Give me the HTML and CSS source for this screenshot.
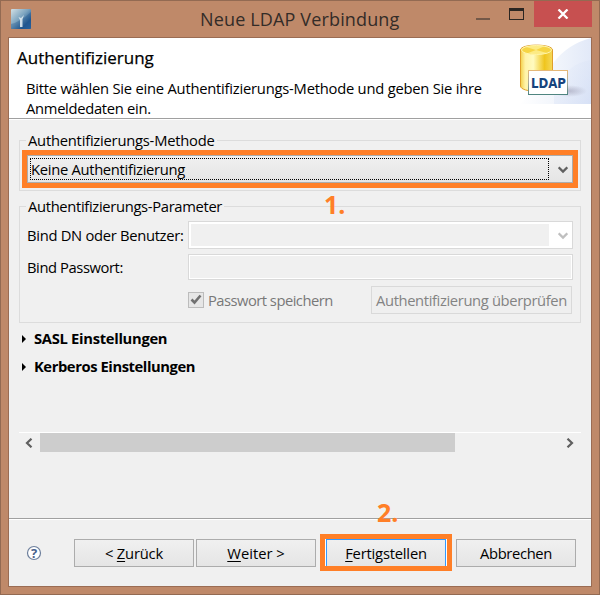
FILE: index.html
```html
<!DOCTYPE html>
<html lang="de">
<head>
<meta charset="utf-8">
<title>Neue LDAP Verbindung</title>
<link rel="stylesheet" href="styles.css">
</head>
<body>
<div class="window">
  <header class="titlebar">
    <svg class="app-icon" width="20" height="20" viewBox="0 0 20 20">
      <defs>
        <linearGradient id="app" x1="0" y1="0" x2="1" y2="1"><stop offset="0" stop-color="#d3e0e4"/><stop offset=".45" stop-color="#7ba3bf"/><stop offset=".75" stop-color="#245b94"/><stop offset="1" stop-color="#2c6aa8"/></linearGradient>
      </defs>
      <rect width="20" height="20" rx="1" fill="url(#app)"/>
      <path d="M0 15Q9 13 20 3V20H0Z" fill="#174c84" opacity=".3"/>
      <path d="M9 18V11L7.500 8L10 9L13 6L11.500 10V18Z" fill="#e4eff5" opacity=".85"/>
    </svg>
    <h1 class="title"><span>Neue LDAP Verbindung</span></h1>
    <div class="controls">
      <span class="minimize"></span>
      <span class="maximize"></span>
      <span class="close"><svg width="12" height="10" viewBox="0 0 12 10"><path d="M1.500 .5L10.500 9.500M10.500 .5L1.500 9.500" stroke="#fff" stroke-width="2.300"/></svg></span>
    </div>
  </header>
  <main class="client">
    <section class="banner">
      <div class="banner-text">
        <h2>Authentifizierung</h2>
        <p><span class="t-line1">Bitte wählen Sie eine Authentifizierungs-Methode und geben Sie ihre</span><br><span class="t-line2">Anmeldedaten ein.</span></p>
      </div>
      <svg class="ldap" width="75" height="66" viewBox="0 0 75 66">
        <defs>
          <linearGradient id="sky" x1="0" y1="0" x2="1" y2="0"><stop offset="0" stop-color="#fff"/><stop offset=".55" stop-color="#f0f4fb"/><stop offset="1" stop-color="#e2e9f8"/></linearGradient>
          <linearGradient id="low" x1="0" y1="0" x2="1" y2="1"><stop offset="0" stop-color="#e6ecf9" stop-opacity=".4"/><stop offset="1" stop-color="#cfdbf4"/></linearGradient>
          <linearGradient id="gold" x1="0" y1="0" x2="1" y2="0"><stop offset="0" stop-color="#f3d04a"/><stop offset=".15" stop-color="#fff3a8"/><stop offset=".4" stop-color="#fffbc0"/><stop offset=".75" stop-color="#efc51e"/><stop offset="1" stop-color="#f5d95a"/></linearGradient>
          <linearGradient id="card" x1="0" y1="0" x2="0" y2="1"><stop offset="0" stop-color="#e5b878"/><stop offset=".5" stop-color="#a9a99a"/><stop offset="1" stop-color="#4f8580"/></linearGradient>
          <radialGradient id="shade"><stop offset="0" stop-color="#9b9bb2" stop-opacity=".6"/><stop offset="1" stop-color="#9b9bb2" stop-opacity="0"/></radialGradient>
        </defs>
        <path d="M75 0Q52 6 38 24Q24 45 4 66H75Z" fill="url(#sky)"/>
        <path d="M75 22Q54 24 38 50V66H75Z" fill="url(#low)" opacity=".6"/>
        <ellipse cx="53" cy="53" rx="18" ry="6" fill="url(#shade)"/>
        <path d="M4.500 12C4.500 5.500 36.500 5.500 36.500 12V48C36.500 55 4.500 55 4.500 48Z" fill="url(#gold)" stroke="#df9f2b"/>
        <ellipse cx="20.500" cy="12" rx="15" ry="4.500" fill="#f6d544" stroke="#fff5ac"/>
        <path d="M20 12L10 9Q20 6 29 8ZM20 12L31 15Q20 18 12 15Z" fill="#fff3a0" opacity=".7"/>
        <rect x="12.500" y="32.500" width="39" height="24" fill="#fff" stroke="url(#card)"/>
        <text x="15" y="49.500" class="ldap-label" textLength="35" lengthAdjust="spacingAndGlyphs">LDAP</text>
      </svg>
    </section>
    <section class="content">
      <fieldset class="group method">
        <legend><span class="t-method">Authentifizierungs-Methode</span></legend>
        <div class="highlight">
          <div class="combo"><div class="focus"><span class="t-keine">Keine Authentifizierung</span></div><svg class="chevron" width="10" height="8" viewBox="0 0 10 8"><path d="M.7 1.300L5 5.600L9.300 1.300" fill="none" stroke="#606060" stroke-width="2.200"/></svg></div>
        </div>
      </fieldset>
      <span class="callout one">1.</span>
      <fieldset class="group params">
        <legend><span class="t-param">Authentifizierungs-Parameter</span></legend>
        <div class="row bind"><label class="t-bind">Bind DN oder Benutzer:</label>
          <div class="combo-off"><div class="combo-fill"></div><svg class="chevron" width="10" height="8" viewBox="0 0 10 8"><path d="M.7 1.300L5 5.600L9.300 1.300" fill="none" stroke="#bfbfbf" stroke-width="2.200"/></svg></div></div>
        <div class="row pass"><label class="t-pass">Bind Passwort:</label><div class="field"></div></div>
        <div class="actions">
          <span class="check"><svg width="12" height="11" viewBox="0 0 12 11"><path d="M1.500 5.500L4.500 8.500L10.500 1.500" fill="none" stroke="#707070" stroke-width="2.600"/></svg></span>
          <span class="save t-save">Passwort speichern</span>
          <span class="verify"><span class="t-verify">Authentifizierung überprüfen</span></span>
        </div>
      </fieldset>
      <div class="expander"><i></i><b class="t-sasl">SASL Einstellungen</b></div>
      <div class="expander"><i></i><b class="t-kerb">Kerberos Einstellungen</b></div>
      <div class="scrollbar">
        <svg width="8" height="10" viewBox="0 0 8 10"><path d="M6.500 .7L2 5L6.500 9.300" fill="none" stroke="#606060" stroke-width="2.200"/></svg>
        <div class="thumb"></div>
        <svg class="right" width="8" height="10" viewBox="0 0 8 10"><path d="M1.500 .7L6 5L1.500 9.300" fill="none" stroke="#606060" stroke-width="2.200"/></svg>
      </div>
    </section>
    <footer class="footer">
      <span class="callout two">2.</span>
      <svg class="help" width="16" height="16" viewBox="0 0 16 16"><circle cx="8" cy="8" r="6.500" fill="#fff" stroke="#6d7f9c" stroke-width="1.200"/><text x="8" y="12.500" text-anchor="middle">?</text></svg>
      <div class="button back"><span class="t-back">&lt; <u>Z</u>urück</span></div>
      <div class="button next"><span class="t-next"><u>W</u>eiter &gt;</span></div>
      <div class="finish"><div class="button"><span class="t-fin"><u>F</u>ertigstellen</span></div></div>
      <div class="button cancel"><span class="t-cancel">Abbrechen</span></div>
    </footer>
  </main>
</div>
</body>
</html>
```
FILE: styles.css
```css
* { box-sizing: border-box; }
body { margin: 0; font: 14.75px/20px "Open Sans", "Noto Sans", sans-serif; color: #000; }
h1, h2, p, fieldset, legend { margin: 0; padding: 0; font-weight: normal; }
span, label, b { white-space: nowrap; }
svg { display: block; flex: none; }
.window { width: 600px; height: 595px; background: #bf8969; border: 1px solid #936a52; padding: 0 7px 7px; display: flex; flex-direction: column; }
.titlebar { height: 36px; display: flex; flex: none; position: relative; }
.app-icon { margin: 8px 0 0 3px; }
.title { margin: 6px 0 0 169px; font-size: 18px; line-height: 25px; color: #332c28; letter-spacing: .15px; }
.controls { position: absolute; right: 0; top: 0; display: flex; }
.minimize { width: 14px; height: 2px; background: #735848; margin: 17px 19px 0 0; }
.maximize { width: 15px; height: 12px; border: 1px solid #2b2622; border-top-width: 3px; margin: 7px 10px 0 0; }
.close { width: 58px; height: 26px; background: #c75050; display: flex; align-items: center; justify-content: center; padding-right: 1px; }
.client { flex: 1; border: 1px solid #9a6c53; background: #f0f0f0; display: flex; flex-direction: column; }
.banner { height: 82px; background: #fff; border-bottom: 1px solid #fff; box-shadow: inset 0 -1px #a0a0a0; display: flex; justify-content: space-between; flex: none; }
.banner-text { padding: 8px 0 0 8px; }
h2 { font-size: 17px; line-height: 24px; -webkit-text-stroke: .25px #000; }
.banner p { margin: 8px 0 0 9px; line-height: 20px; }
.ldap-label { font: bold 14px "DejaVu Sans", sans-serif; fill: #15437d; }
.content { height: 398px; padding: 11px 10px 0 10px; position: relative; flex: none; }
.group { border: 1px solid #dcdcdc; position: relative; }
legend { margin-left: 6px; padding: 0 2px; height: 19px; line-height: 18px; }
.method { height: 60px; }
.method .highlight { margin: 0 2px; }
.highlight { border: 5px solid #ff7f27; height: 38px; }
.combo { height: 28px; border: 1px solid #acacac; background: linear-gradient(#f0f0f0, #e5e5e5); padding: 2px; display: flex; align-items: center; }
.focus { width: 519px; height: 22px; border: 1px dotted #000; line-height: 20px; }
.chevron { margin: 1px 0 0 9px; }
.callout { position: absolute; color: #ff7f27; font: bold 25px/28px "Open Sans", sans-serif; z-index: 2; }
.one { left: 315px; top: 70px; }
.params { height: 126px; margin-top: 6px; }
.row { display: flex; align-items: center; }
.row label { width: 161px; margin-left: 7px; }
.bind { margin-top: 5px; }
.combo-off { width: 385px; height: 28px; border: 1px solid #d9d9d9; background: #fff; display: flex; align-items: center; padding-left: 2px; }
.combo-fill { width: 358px; height: 22px; background: #f0f0f0; }
.pass { margin-top: 5px; }
.field { width: 385px; height: 26px; border: 1px solid #d9d9d9; background: #f0f0f0; box-shadow: inset 0 0 0 1px #fff; }
.actions { display: flex; align-items: center; margin: 6px 0 0 168px; height: 28px; color: #787878; }
.check { width: 16px; height: 16px; border: 1px solid #bcbcbc; background: #e6e6e6; padding: 1px; }
.save { margin-left: 4px; width: 163px; }
.verify { width: 201px; height: 28px; border: 1px solid #d9d9d9; background: #efefef; line-height: 26px; padding-left: 4px; color: #838383; }
.expander { height: 28px; display: flex; align-items: center; padding-left: 3px; }
.expander b { padding-bottom: 2px; }
.params + .expander { margin-top: 2px; }
.expander i { width: 0; border: 4px solid transparent; border-left: 4px solid #000; border-right: 0; margin-right: 8px; }
.scrollbar { border-top: 1px solid #fff; margin-top: 51px; height: 20px; display: flex; align-items: center; padding-left: 6px; }
.thumb { width: 415px; height: 19px; background: #cdcdcd; margin-left: 7px; }
.right { margin-left: 111px; }
.footer { flex: 1; border-top: 1px solid #a0a0a0; box-shadow: inset 0 1px #fff; display: flex; align-items: flex-start; position: relative; }
.two { left: 368px; top: -21px; }
.help { margin: 26px 0 0 17px; }
.help text { font: bold 13px "Open Sans", sans-serif; fill: #48628c; }
.button { width: 120px; height: 28px; border: 1px solid #acacac; background: linear-gradient(#f0f0f0, #e5e5e5); text-align: center; line-height: 26px; }
.footer > .button { margin-top: 20px; }
.back { margin-left: 32px; }
.next { margin-left: 2px; }
.finish { width: 132px; height: 37px; border: 5px solid #ff7f27; margin: 15px 4px 0; background: #fff; overflow: hidden; }
.finish .button { margin-left: 1px; border-color: #3399ff; }
u { text-underline-offset: 2px; text-decoration-thickness: 1px; }

/* Label tracking */
.t-line1, .t-method { letter-spacing: -.23px; }
.t-line2, .t-sasl, .t-keine, .t-bind { letter-spacing: -.3px; }
.t-verify { letter-spacing: -.37px; }
.t-param { letter-spacing: -.33px; }
.t-pass, .t-kerb { letter-spacing: -.42px; }
.t-save { letter-spacing: -.52px; }
.t-back, .t-fin { letter-spacing: -.2px; }
.t-cancel { letter-spacing: -.35px; }
```
